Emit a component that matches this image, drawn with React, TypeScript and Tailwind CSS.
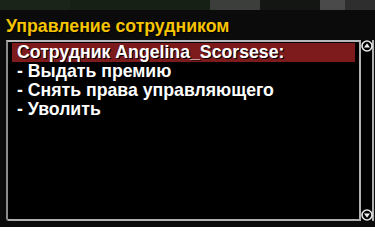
import React from 'react';

const items = [
    'Сотрудник Angelina_Scorsese:',
    '- Выдать премию',
    '- Снять права управляющего',
    '- Уволить',
];

function ScrollArrow({ up }: { up?: boolean }) {
    return (
        <svg width="12" height="12" viewBox="0 0 12 12" className="block">
            <circle cx="6" cy="6" r="5" fill="#000" stroke="#e8e8e8" strokeWidth="1.6" />
            {up ? (
                <path d="M6 3.2 L9 7.6 L3 7.6 Z" fill="#f0f0f0" />
            ) : (
                <path d="M6 8.8 L9 4.4 L3 4.4 Z" fill="#f0f0f0" />
            )}
        </svg>
    );
}

export default function App() {
    const selected = 0;

    return (
        <div className="w-[375px] h-[227px] overflow-hidden flex flex-col bg-black font-['Liberation_Sans',Arial,sans-serif] font-bold">
            {/* game scene behind the dialog */}
            <div className="h-[10px] flex">
                <div className="w-[70px] bg-[#1a2418]" />
                <div className="w-[140px] bg-[#162014]" />
                <div className="w-[50px] bg-[#3c3e3c]" />
                <div className="w-[60px] bg-[#141614]" />
                <div className="w-[25px] bg-[#4a4a4a]" />
                <div className="flex-1 bg-[#2e2e2e]" />
            </div>

            <div className="flex-1 flex flex-col bg-[#0b0b0b] pl-[6px] pr-[1px]">
                <div className="h-[30px] flex items-center pt-[4px] text-[17.7px] leading-none text-[#f7c400] [text-shadow:1px_1px_0_#000]">
                    Управление сотрудником
                </div>

                <div className="flex h-[181px]">
                    <div className="flex-1 border-2 border-l-[#8c8c8c] border-t-[#b8b8b8] border-b-[#b0b0b0] border-r-[#b0b0b0] rounded-bl-[3px] bg-black pt-[1px] pl-[4px] pr-[4px]">
                        {items.map((item, i) => (
                            <div
                                key={item}
                                className={`h-[19px] flex items-center pl-[5px] text-[17.7px] leading-none text-white [text-shadow:1px_1px_0_#000] ${
                                    i === selected ? 'bg-[#7c1a1c]' : ''
                                }`}
                            >
                                {item}
                            </div>
                        ))}
                    </div>
                    <div className="w-[13px] flex flex-col justify-between items-center border-r-2 border-[#b0b0b0] bg-black">
                        <ScrollArrow up />
                        <ScrollArrow />
                    </div>
                </div>
            </div>
        </div>
    );
}
